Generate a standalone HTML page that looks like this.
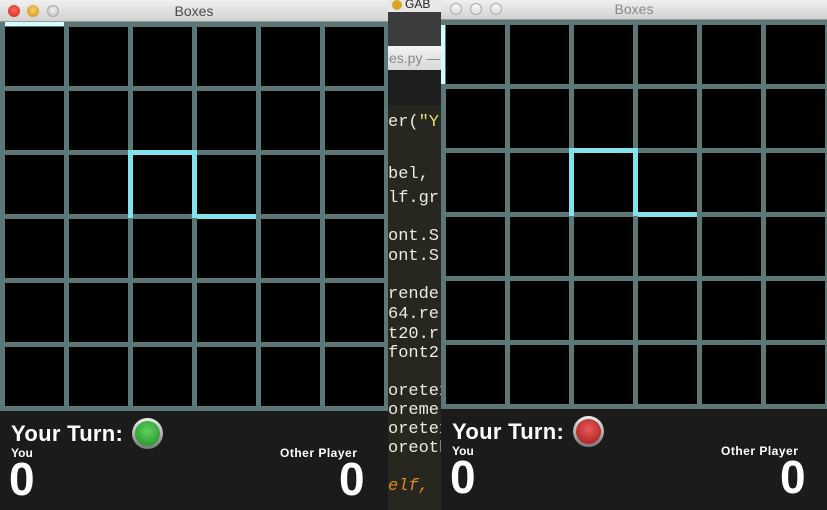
<!DOCTYPE html>
<html><head><meta charset="utf-8"><style>
*{margin:0;padding:0;box-sizing:border-box}
body{width:827px;height:510px;overflow:hidden;background:#27261f;position:relative;font-family:"Liberation Sans",sans-serif}
.a{position:absolute}
.grid{background:#5b7777}
.cell{position:absolute;background:#000;width:59px;height:59px}
.hl{position:absolute;background:#80e2ea}
.title{background:linear-gradient(#f0f0f0,#d2d2d2);border-bottom:1px solid #999;color:#4a4a4a;font-size:14px;text-align:center}
.panel{background:#1b1b1b}
.code{position:absolute;left:388px;font-family:"Liberation Mono",monospace;font-size:17px;color:#ecebe0;white-space:pre}
.tl{position:absolute;width:12px;height:12px;border-radius:50%}
.b{color:#fff;font-weight:bold;position:absolute}
</style></head><body>
<div class="a" style="left:388px;top:0;width:53px;height:12px;background:#e8e8e8"></div>
<div class="a" style="left:405px;top:-3px;font-size:12px;color:#222">GAB</div>
<div class="a" style="left:392px;top:0;width:10px;height:10px;border-radius:50%;background:#d9a520"></div>
<div class="a" style="left:388px;top:12px;width:53px;height:34px;background:#3c3c3c"></div>
<div class="a" style="left:388px;top:46px;width:53px;height:24px;background:linear-gradient(#f4f4f4,#d8d8d8)"></div>
<div class="a" style="left:389px;top:50px;font-size:14px;color:#888">es.py —</div>
<div class="a" style="left:388px;top:70px;width:53px;height:35px;background:#1e1e1e"></div>
<div class="code" style="top:113px">er(<span style="color:#e6db74">"Y</span></div>
<div class="code" style="top:165px">bel,</div>
<div class="code" style="top:189px">lf.gr</div>
<div class="code" style="top:227px">ont.S</div>
<div class="code" style="top:247px">ont.S</div>
<div class="code" style="top:285px">rende</div>
<div class="code" style="top:305px">64.re</div>
<div class="code" style="top:325px">t20.r</div>
<div class="code" style="top:344px">font2</div>
<div class="code" style="top:382px">oretex</div>
<div class="code" style="top:401px">oreme</div>
<div class="code" style="top:420px">oretex</div>
<div class="code" style="top:439px">oreoth</div>
<div class="code" style="top:477px;color:#e08a1e;font-style:italic">elf, </div>

<div class="a title" style="left:0;top:0;width:388px;height:22px;line-height:22px">Boxes</div>
<div class="tl" style="left:8px;top:5px;background:radial-gradient(circle at 50% 40%,#ff6a5f,#c9231a)"></div>
<div class="tl" style="left:27px;top:5px;background:radial-gradient(circle at 50% 40%,#ffd36a,#c48a10)"></div>
<div class="tl" style="left:47px;top:5px;background:radial-gradient(circle at 50% 40%,#f4f4f4,#b8b8b8);border:1px solid #aaa"></div>
<div class="a grid" style="left:0;top:22px;width:388px;height:389px" id="g1"></div>
<div class="a panel" style="left:0;top:411px;width:388px;height:99px"></div>
<div class="b" style="left:11px;top:421px;font-size:22px;letter-spacing:.3px">Your Turn:</div>
<div class="a" style="left:132px;top:418px;width:31px;height:31px;border-radius:50%;background:linear-gradient(#eee,#777);padding:3px"><div style="width:25px;height:25px;border-radius:50%;background:radial-gradient(circle at 50% 40%,#5ed25e,#1d8a22)"></div></div>
<div class="b" style="left:11px;top:446px;font-size:12px">You</div>
<div class="b" style="left:9px;top:452px;font-size:46px">0</div>
<div class="b" style="left:280px;top:446px;font-size:12px;letter-spacing:.5px">Other Player</div>
<div class="b" style="left:339px;top:452px;font-size:46px">0</div>

<div class="a title" style="left:441px;top:0;width:386px;height:20px;line-height:19px;color:#888">Boxes</div>
<div class="tl" style="left:450px;top:3px;background:linear-gradient(#fafafa,#ddd);border:1px solid #aaa"></div>
<div class="tl" style="left:470px;top:3px;background:linear-gradient(#fafafa,#ddd);border:1px solid #aaa"></div>
<div class="tl" style="left:490px;top:3px;background:linear-gradient(#fafafa,#ddd);border:1px solid #aaa"></div>
<div class="a grid" style="left:441px;top:20px;width:386px;height:389px" id="g2"></div>
<div class="a panel" style="left:441px;top:409px;width:386px;height:101px"></div>
<div class="b" style="left:452px;top:419px;font-size:22px;letter-spacing:.3px">Your Turn:</div>
<div class="a" style="left:573px;top:416px;width:31px;height:31px;border-radius:50%;background:linear-gradient(#eee,#777);padding:3px"><div style="width:25px;height:25px;border-radius:50%;background:radial-gradient(circle at 50% 40%,#e85a5a,#a11616)"></div></div>
<div class="b" style="left:452px;top:444px;font-size:12px">You</div>
<div class="b" style="left:450px;top:450px;font-size:46px">0</div>
<div class="b" style="left:721px;top:444px;font-size:12px;letter-spacing:.5px">Other Player</div>
<div class="b" style="left:780px;top:450px;font-size:46px">0</div>

<script>
function grid(id){var g=document.getElementById(id);for(var r=0;r<6;r++)for(var c=0;c<6;c++){var d=document.createElement('div');d.className='cell';d.style.left=(5+c*64)+'px';d.style.top=(5+r*64)+'px';g.appendChild(d);}}
grid('g1');grid('g2');
function hl(x,y,w,h,col){var d=document.createElement('div');d.className='hl';d.style.cssText='left:'+x+'px;top:'+y+'px;width:'+w+'px;height:'+h+'px'+(col?';background:'+col:'');document.body.appendChild(d);}
hl(5,22,59,4,'#d8fbff');
hl(128,150,69,5);hl(128,150,5,68);hl(192,150,5,68);hl(197,214,59,5);
hl(441,25,4,59,'#d8fbff');
hl(569,148,69,5);hl(569,148,5,68);hl(633,148,5,68);hl(638,212,59,5);
</script>
</body></html>
